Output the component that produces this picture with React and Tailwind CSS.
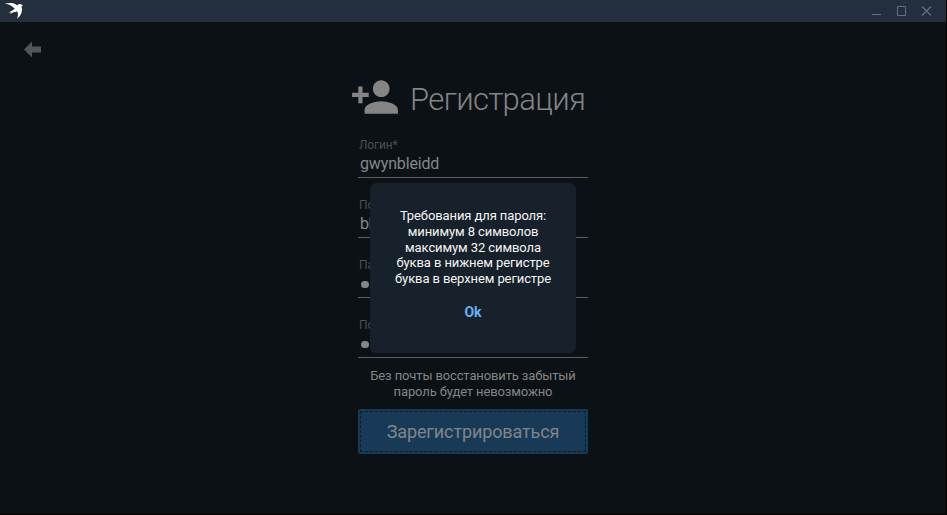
const Line = ({ label, children }) => (
  <div className="h-[60px] border-b border-[#5b5e60] pt-[19px] pl-px">
    <div className="h-[16px] truncate text-[12px] leading-[17px] tracking-[-0.15px] text-[#4c4f51]">{label}</div>
    <div className="flex h-[22px] items-center pl-px text-[16px] leading-[22px] tracking-[-0.15px] text-[#858788]">{children}</div>
  </div>
);

const Dots = () => (
  <div className="flex gap-[3px] pl-px pt-px">
    {Array.from({ length: 10 }, (_, i) => (
      <span key={i} className="size-[7.5px] rounded-full bg-[#858585]" />
    ))}
  </div>
);

export default function App() {
  return (
    <div className="relative flex h-[515px] w-[947px] flex-col overflow-hidden border-r border-b border-black bg-[#0c1115] font-['Roboto',sans-serif]">
      <header className="flex h-[22px] shrink-0 items-center justify-between bg-[#242f3d]">
        <svg className="ml-[4px]" width="20" height="22" viewBox="0 0 20 22" fill="#fff">
          <path d="M1 3.600C5 2.700 9.500 2.900 11.500 4.200L13.200 5.400C14 4.400 15 4 16 4.100C17.200 4.200 18 4.700 19 5.300L17.700 6.200C17.500 7.200 18 8 18 9.500C18 13 16.500 16.500 13 18.800C14.400 15.500 14.300 13.200 13 11.200C12 11.800 11 12 9.500 12.200L5.800 14L7.300 12.200L4.500 12.400L8.500 10.400L10.800 8.500C9.500 7.700 8 6.600 6.800 5.600C5 4.500 3 4.200 1 3.600Z" />
        </svg>
        <svg width="76" height="22" viewBox="0 0 76 22" fill="none" stroke="#627080">
          <path d="M2 14.500H11" />
          <path d="M27.500 6.500H35.500V15.500H27.500Z" />
          <path strokeWidth="1.300" d="M52 6.500L61 15.500M61 6.500L52 15.500" />
        </svg>
      </header>
      <main className="flex flex-1 flex-col">
        <svg className="mt-[19px] ml-[24px] shrink-0" width="18" height="17" viewBox="0 0 18 17" fill="#555">
          <path d="M0 8.500L8 0.500V5.500H17V11.500H8V16.500Z" />
        </svg>
        <div className="ml-[350px] mt-[14px] flex h-[50px] items-center">
          <svg className="shrink-0" width="50" height="50" viewBox="0 0 24 24" fill="#858585">
            <path d="M15 12c2.210 0 4-1.790 4-4s-1.790-4-4-4-4 1.790-4 4 1.790 4 4 4zm-9-2V7H4v3H1v2h3v3h2v-3h3v-2H6zm9 4c-2.670 0-8 1.340-8 4v2h16v-2c0-2.660-5.330-4-8-4z" />
          </svg>
          <h1 className="ml-[10px] mt-[6px] whitespace-nowrap text-[31px] font-light leading-[40px] tracking-[-0.6px] text-[#858585]">Регистрация</h1>
        </div>
        <div className="ml-[358px] -mt-[4px] w-[230px]">
          <Line label="Логин*">gwynbleidd</Line>
          <Line label="Почта"><span className="tracking-[-0.6px]">blackwolf</span></Line>
          <Line label="Пароль*"><Dots /></Line>
          <Line label="Повторите пароль*"><Dots /></Line>
          <p className="mt-[10px] text-center text-[13px] leading-[16px] tracking-[-0.13px] text-[#858585]">
            Без почты восстановить забытый
            <br />
            пароль будет невозможно
          </p>
          <button className="mt-[9px] flex h-[45px] w-full rounded-[2px] bg-[#193a56] p-[2px]">
            <span className="flex h-full w-full items-center justify-center border border-dashed border-[#0b1c2b] text-[18px] leading-[24px] tracking-[-0.12px] text-[#7f858b]">
              Зарегистрироваться
            </span>
          </button>
        </div>
      </main>
      <div className="absolute left-[370px] top-[183px] flex h-[170px] w-[206px] flex-col items-center rounded-[6px] bg-[#17212b] pt-[25px] text-[13px] leading-[15.800px] text-[#f5f5f5]">
        <p className="whitespace-nowrap text-center tracking-[-0.1px]">
          Требования для пароля:
          <br />
          минимум 8 символов
          <br />
          максимум 32 символа
          <br />
          буква в нижнем регистре
          <br />
          буква в верхнем регистре
        </p>
        <button className="mt-[16px] text-[14px] font-bold leading-[18px] tracking-[-0.1px] text-[#6ab2f2]">Ok</button>
      </div>
    </div>
  );
}
